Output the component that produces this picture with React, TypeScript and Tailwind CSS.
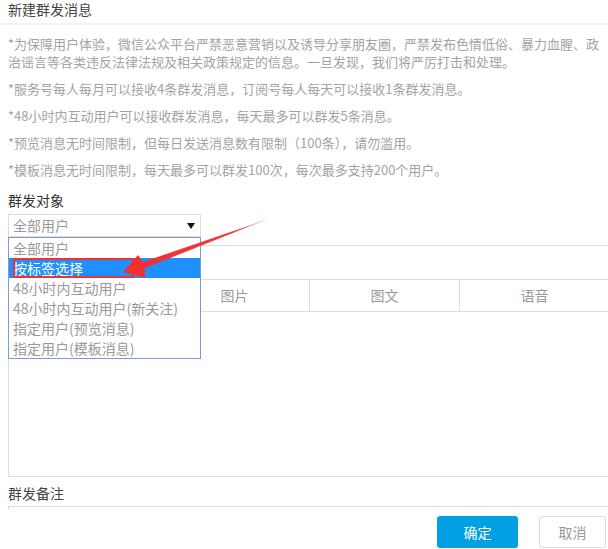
import React from "react";

const font = {
  fontFamily: '"Noto Sans CJK SC", "Liberation Sans", sans-serif',
};

export default function App() {
  const notes = [
    "*服务号每人每月可以接收4条群发消息，订阅号每人每天可以接收1条群发消息。",
    "*48小时内互动用户可以接收群发消息，每天最多可以群发5条消息。",
    "*预览消息无时间限制，但每日发送消息数有限制（100条），请勿滥用。",
    "*模板消息无时间限制，每天最多可以群发100次，每次最多支持200个用户。",
  ];
  const options = [
    "全部用户",
    "按标签选择",
    "48小时内互动用户",
    "48小时内互动用户(新关注)",
    "指定用户(预览消息)",
    "指定用户(模板消息)",
  ];
  return (
    <div className="relative w-[608px] h-[549px] overflow-hidden bg-white" style={font}>
      <div className="pl-2 pt-0">
        <div className="h-[18px] text-[14px] leading-[18px] text-[#444]">新建群发消息</div>
      </div>
      <div className="mt-[5px] h-[2px] w-[608px] bg-[#f1f3f8]" />
      <div className="pl-2">
        <div className="mt-[10px] flex w-[610px] flex-col gap-[9px]">
          <p className="whitespace-nowrap text-[13px] leading-[18px] text-[#a3a3a3]">
            *为保障用户体验，微信公众平台严禁恶意营销以及诱导分享朋友圈，严禁发布色情低俗、暴力血腥、政
            <br />
            治谣言等各类违反法律法规及相关政策规定的信息。一旦发现，我们将严厉打击和处理。
          </p>
          {notes.map((t) => (
            <p key={t} className="text-[13px] leading-[18px] text-[#a3a3a3]">
              {t}
            </p>
          ))}
        </div>
        <div className="mt-[11px] text-[14px] leading-[20px] text-[#333]">群发对象</div>
        <div className="mt-[4px] flex h-[23px] w-[193px] items-center justify-between border border-[#dddddd] pl-[4px] pr-[5px] text-[14px] text-[#999]">
          <span>全部用户</span>
          <svg width="8" height="6" viewBox="0 0 8 6">
            <polygon points="0,0 8,0 4,6" fill="#111" />
          </svg>
        </div>
        <div className="mt-[8px] w-[620px] border-y border-l border-[#dddddd]">
          <div className="h-[34px] border-b border-[#dddddd]" />
          <div className="grid h-[32px] grid-cols-[150px_150px_150px_150px] border-b border-[#dddddd] text-[14px] text-[#999]">
            <div />
            <div className="flex items-center justify-center border-l border-[#dddddd]">图片</div>
            <div className="flex items-center justify-center border-l border-[#dddddd]">图文</div>
            <div className="flex items-center justify-center border-l border-[#dddddd]">语音</div>
          </div>
          <div className="h-[164px]" />
        </div>
        <div className="mt-[6px] text-[14px] leading-[20px] text-[#444]">群发备注</div>
        <div className="mt-[3px] h-[4px] w-[620px] border-l border-t border-[#dddddd]" />
        <div className="mt-[6px] flex gap-[21px] pl-[429px]">
          <div className="flex h-[32px] w-[81px] items-center justify-center rounded-[3px] bg-[#00a0e3] text-[14px] text-white">
            确定
          </div>
          <div className="flex h-[32px] w-[67px] items-center justify-center rounded-[3px] border border-[#dddddd] text-[14px] text-[#999]">
            取消
          </div>
        </div>
      </div>

      {/* open dropdown list */}
      <div className="absolute left-[8px] top-[237px] w-[193px] border border-[#7a9bd4] bg-white">
        {options.map((o, i) => (
          <div
            key={o}
            className={
              i === 1
                ? "relative h-[20px] bg-[#1e90ff] pl-[4px] text-[14px] leading-[20px] text-white"
                : "h-[20px] pl-[4px] text-[14px] leading-[20px] text-[#999]"
            }
          >
            {o}
            {i === 1 && (
              <div className="absolute left-[4px] top-0 h-[20px] w-[121px] border-2 border-[#ee3333]" />
            )}
          </div>
        ))}
      </div>

      {/* annotation arrow */}
      <svg className="pointer-events-none absolute left-0 top-0" width="608" height="549">
        <defs>
          <linearGradient id="ag" x1="268" y1="219" x2="123" y2="272" gradientUnits="userSpaceOnUse">
            <stop offset="0" stopColor="#ff9a9a" />
            <stop offset="0.25" stopColor="#f23a3a" />
            <stop offset="1" stopColor="#f02e2e" />
          </linearGradient>
        </defs>
        <polygon
          points="123,272 138,255 143,262 268,219 145,268 145,278"
          fill="url(#ag)"
        />
      </svg>
    </div>
  );
}
